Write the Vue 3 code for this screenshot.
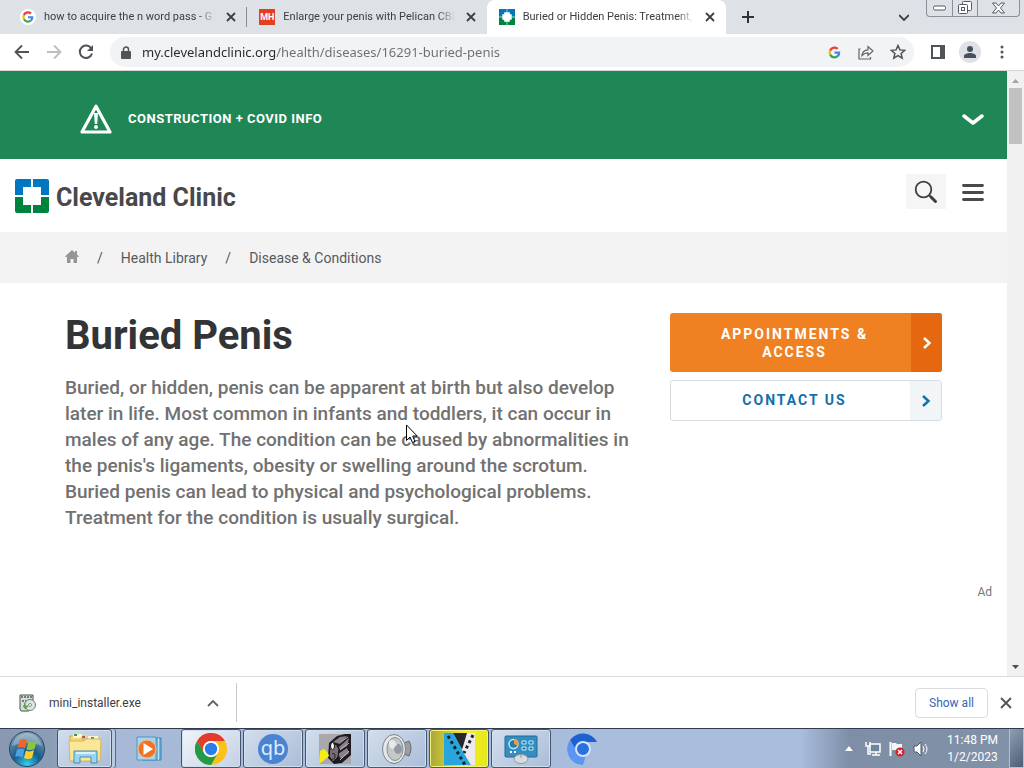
<template>
  <div class="browser">
    <!-- Tab strip -->
    <header class="tab-strip">
      <div class="tabs" role="tablist">
        <div v-for="tab in tabs" :key="tab.id" class="tab" :class="{ active: tab.id === activeTab }" role="tab" @click="activeTab = tab.id">
          <svg v-if="tab.icon === 'google'" class="favicon" viewBox="0 0 24 24">
            <circle cx="12" cy="12" r="12" fill="#fff" />
            <path d="M20 12.2c0-.6 0-1-.1-1.5H12v3.100h4.500c-.3 1.300-1 2.100-1.700 2.600l2.700 2.100c1.600-1.500 2.500-3.700 2.500-6.300z" fill="#4285f4" />
            <path d="M12 20.500c2.300 0 4.100-.7 5.500-2l-2.700-2.100c-.7.5-1.700.8-2.800.8-2.200 0-4.100-1.500-4.700-3.500l-2.800 2.100c1.300 2.800 4.200 4.700 7.500 4.700z" fill="#34a853" />
            <path d="M7.300 13.700c-.4-1.100-.4-2.300 0-3.400L4.500 8.100c-1.200 2.400-1.200 5.300 0 7.700z" fill="#fbbc05" />
            <path d="M12 6.800c1.200 0 2.300.4 3.200 1.300l2.400-2.400C16.100 4.300 14.200 3.500 12 3.500c-3.300 0-6.200 1.900-7.500 4.600l2.800 2.200c.6-2 2.500-3.500 4.700-3.500z" fill="#ea4335" />
          </svg>
          <span v-else-if="tab.icon === 'mh'" class="favicon mh">MH</span>
          <svg v-else class="favicon" viewBox="0 0 34 34">
            <path d="M0 0h34v17H0z" fill="#0077b8" />
            <path d="M0 17h34v17H0z" fill="#00843d" />
            <path d="M16 0h2v34h-2zM0 16h34v2H0z" fill="#9fd0d0" />
            <path d="M11 7h12v4h4v12h-4v4H11v-4H7V11h4z" fill="#fff" />
          </svg>
          <span class="tab-title">{{ tab.title }}</span>
          <button class="icon-btn" aria-label="Close tab">
            <svg width="10" height="10" viewBox="0 0 10 10"><path d="M1 1l8 8M9 1L1 9" stroke="#3c4043" stroke-width="1.800" /></svg>
          </button>
        </div>
      </div>
      <button class="icon-btn new-tab" aria-label="New tab">
        <svg width="12" height="12" viewBox="0 0 12 12"><path d="M6 0v12M0 6h12" stroke="#303336" stroke-width="2" /></svg>
      </button>
      <button class="icon-btn tab-search" aria-label="Search tabs">
        <svg width="10" height="7" viewBox="0 0 10 7"><path d="M0 1l5 5 5-5" fill="none" stroke="#3c4043" stroke-width="1.800" /></svg>
      </button>
      <div class="window-controls">
        <button aria-label="Minimize">
          <svg width="13" height="6" viewBox="0 0 13 6"><rect x=".5" y="1" width="12" height="4" rx="1.500" fill="#fff" stroke="#555a62" /></svg>
        </button>
        <button aria-label="Restore">
          <svg width="14" height="14" viewBox="0 0 14 14" fill="#fff" stroke="#555a62">
            <rect x="4.500" y=".5" width="9" height="9" rx="1" />
            <rect x=".5" y="3.500" width="9" height="9" rx="1" />
            <rect x="3.500" y="6.500" width="3" height="3" />
          </svg>
        </button>
        <button class="wide" aria-label="Close">
          <svg width="13" height="12" viewBox="0 0 13 12"><path d="M.5 1h3.500l2.500 3L9 1h3.500L8.500 6l4 5H9L6.500 8 4 11H.5l4-5z" fill="#fff" stroke="#555a62" /></svg>
        </button>
      </div>
    </header>

    <!-- Toolbar -->
    <nav class="toolbar">
      <button class="tool" aria-label="Back">
        <svg width="16" height="16" viewBox="0 0 16 16"><path d="M15 8H2M8 1.500L1.500 8 8 14.500" fill="none" stroke="#505357" stroke-width="1.800" /></svg>
      </button>
      <button class="tool" aria-label="Forward">
        <svg width="16" height="16" viewBox="0 0 16 16"><path d="M1 8h13M8 1.500L14.500 8 8 14.500" fill="none" stroke="#bcbec1" stroke-width="1.800" /></svg>
      </button>
      <button class="tool" aria-label="Reload">
        <svg width="16" height="16" viewBox="0 0 16 16">
          <path d="M13.300 4.500A6.200 6.200 0 1 0 14 9.500" fill="none" stroke="#505357" stroke-width="2" />
          <path d="M15 1v6H9z" fill="#505357" />
        </svg>
      </button>
      <div class="address">
        <svg width="10" height="13" viewBox="0 0 10 13">
          <rect y="5" width="10" height="8" rx="1" fill="#505357" />
          <path d="M2.500 6V3.500a2.500 2.500 0 0 1 5 0V6" fill="none" stroke="#505357" stroke-width="1.500" />
        </svg>
        <input v-model="url" class="url" type="text" aria-label="Address" spellcheck="false" />
        <button class="tool" aria-label="Google">
          <svg width="17" height="17" viewBox="0 0 24 24">
            <path d="M20 12.2c0-.6 0-1-.1-1.500H12v3.100h4.500c-.3 1.300-1 2.100-1.700 2.600l2.700 2.100c1.600-1.500 2.500-3.700 2.500-6.300z" fill="#4285f4" />
            <path d="M12 20.500c2.300 0 4.100-.7 5.500-2l-2.700-2.100c-.7.5-1.700.8-2.800.8-2.200 0-4.100-1.500-4.700-3.500l-2.800 2.100c1.300 2.800 4.200 4.700 7.500 4.700z" fill="#34a853" />
            <path d="M7.300 13.700c-.4-1.100-.4-2.300 0-3.400L4.500 8.100c-1.200 2.400-1.200 5.300 0 7.700z" fill="#fbbc05" />
            <path d="M12 6.800c1.200 0 2.300.4 3.200 1.300l2.400-2.400C16.100 4.300 14.200 3.500 12 3.500c-3.300 0-6.200 1.900-7.500 4.600l2.800 2.200c.6-2 2.500-3.500 4.700-3.500z" fill="#ea4335" />
          </svg>
        </button>
        <button class="tool" aria-label="Share">
          <svg width="16" height="15" viewBox="0 0 16 15" fill="none" stroke="#5f6368" stroke-width="1.200">
            <path d="M2.500 4H1v10h11.500v-2" />
            <path d="M4 10.500c.3-3.700 2.500-5.500 6-5.700V1.500l5 4.500-5 4.500V7.800C7.500 7.800 5.500 8.800 4 10.500z" />
          </svg>
        </button>
        <button class="tool" aria-label="Bookmark">
          <svg width="16" height="16" viewBox="0 0 16 16"><path d="M8 1.500l1.900 4.400 4.800.4-3.600 3.200 1.100 4.700L8 11.700l-4.200 2.500 1.100-4.700L1.300 6.300l4.800-.4z" fill="none" stroke="#505357" stroke-width="1.500" /></svg>
        </button>
      </div>
      <button class="tool" aria-label="Side panel">
        <svg width="14" height="14" viewBox="0 0 14 14"><path d="M1 1h12v12H1z" fill="none" stroke="#505357" stroke-width="2" /><path d="M9 0h5v14H9z" fill="#505357" /></svg>
      </button>
      <button class="tool" aria-label="Profile">
        <svg width="22" height="22" viewBox="0 0 22 22"><circle cx="11" cy="11" r="11" fill="#dee1e6" /><circle cx="11" cy="8" r="3" fill="#46505c" /><path d="M5 17v-2c0-2 3.500-3 6-3s6 1 6 3v2z" fill="#46505c" /></svg>
      </button>
      <button class="tool" aria-label="Menu">
        <svg width="4" height="14" viewBox="0 0 4 14" fill="#505357"><circle cx="2" cy="2" r="1.500" /><circle cx="2" cy="7" r="1.500" /><circle cx="2" cy="12" r="1.500" /></svg>
      </button>
    </nav>

    <div class="viewport">
      <main class="page">
        <button class="alert-bar">
          <svg width="32" height="30" viewBox="0 0 32 30">
            <path d="M16 2.200L30 28H2z" fill="none" stroke="#fff" stroke-width="3.200" stroke-linejoin="round" />
            <path d="M14 9h4l-.8 11h-2.400z" fill="#fff" />
            <circle cx="16" cy="23" r="2" fill="#fff" />
          </svg>
          <span>CONSTRUCTION + COVID INFO</span>
          <svg class="alert-chevron" width="22" height="12" viewBox="0 0 22 12"><path d="M2 3l9 7 9-7" fill="none" stroke="#fff" stroke-width="3.500" stroke-linecap="round" stroke-linejoin="round" /></svg>
        </button>

        <div class="brand-bar">
          <a href="#" class="brand">
            <svg width="34" height="34" viewBox="0 0 34 34">
              <path d="M2 0h14v8H8v8H0V2a2 2 0 0 1 2-2zM18 0h14a2 2 0 0 1 2 2v14h-8V8h-8z" fill="#0077c0" />
              <path d="M0 18h8v8h8v8H2a2 2 0 0 1-2-2zM26 18h8v14a2 2 0 0 1-2 2H18v-8h8z" fill="#00843d" />
            </svg>
            <span class="brand-name">Cleveland Clinic</span>
          </a>
          <button class="search-btn" aria-label="Search">
            <svg width="24" height="24" viewBox="0 0 24 24" fill="none" stroke="#3e3e40">
              <circle cx="9.500" cy="9.500" r="7.800" stroke-width="1.800" />
              <path d="M15 15l2 2" stroke-width="2" />
              <path d="M17 17l4.500 4.500" stroke-width="3" stroke-linecap="round" />
            </svg>
          </button>
          <button class="menu-btn" aria-label="Menu">
            <svg width="22" height="18" viewBox="0 0 22 18"><path d="M1.500 2.500h19M1.500 9.500h19M1.500 16.500h19" stroke="#4a4a4c" stroke-width="2.800" stroke-linecap="round" /></svg>
          </button>
        </div>

        <nav class="breadcrumbs">
          <a href="#" aria-label="Home">
            <svg width="14" height="15" viewBox="0 0 14 15"><path d="M7 0l3 2.700V1h2v3.500l2 2-1 .8-1-.8V13H8.500V9h-3v4H2V6.500l-1 .8-1-.8z" fill="#969696" /></svg>
          </a>
          <template v-for="crumb in crumbs" :key="crumb">
            <span>/</span>
            <a href="#">{{ crumb }}</a>
          </template>
        </nav>

        <section class="hero">
          <div class="hero-text">
            <h1>Buried Penis</h1>
            <p>
              Buried, or hidden, penis can be apparent at birth but also develop later in life. Most common in infants
              and toddlers, it can occur in males of any age. The condition can be caused by abnormalities in the
              penis's ligaments, obesity or swelling around the scrotum. Buried penis can lead to physical and
              psychological problems. Treatment for the condition is usually surgical.
            </p>
          </div>
          <div class="hero-actions">
            <a href="#" class="cta primary">
              <span class="cta-label">APPOINTMENTS &amp; ACCESS</span>
              <span class="cta-arrow">
                <svg width="10" height="14" viewBox="0 0 10 14"><path d="M2 2l5.500 5L2 12" fill="none" stroke="currentColor" stroke-width="2.500" /></svg>
              </span>
            </a>
            <a href="#" class="cta secondary">
              <span class="cta-label">CONTACT US</span>
              <span class="cta-arrow">
                <svg width="10" height="14" viewBox="0 0 10 14"><path d="M2 2l5.500 5L2 12" fill="none" stroke="currentColor" stroke-width="2.500" /></svg>
              </span>
            </a>
          </div>
        </section>
        <div class="ad-label">Ad</div>
      </main>

      <div class="scrollbar">
        <svg width="7" height="4" viewBox="0 0 7 4"><path d="M0 4l3.500-4L7 4z" fill="#a3a3a3" /></svg>
        <div class="thumb"></div>
        <svg class="down" width="7" height="4" viewBox="0 0 7 4"><path d="M0 0l3.500 4L7 0z" fill="#505050" /></svg>
      </div>

      <!-- Mouse pointer -->
      <svg class="cursor" width="12" height="20" viewBox="0 0 12 20"><path d="M.5 1v15.500L4 13l2.500 5.500 2.500-1L6.700 12h4.500z" fill="#fff" stroke="#000" /></svg>
    </div>

    <!-- Downloads -->
    <footer class="downloads">
      <div class="download-item">
        <svg width="18" height="18" viewBox="0 0 18 18">
          <path d="M1 1h13v5l-2 9-2 2H2l-1-2z" fill="#d5dfd8" stroke="#48534e" />
          <path d="M2 3h11M3 7h5" stroke="#6c8074" stroke-width="2" stroke-dasharray="2 1" />
          <circle cx="11" cy="11" r="5.500" fill="#d9e5df" stroke="#71847b" />
          <circle cx="11" cy="11" r="1.500" fill="#fff" stroke="#83968b" />
          <path d="M6 9v5M4 12l2.500 3L9 12z" fill="#61a543" stroke="#61a543" />
        </svg>
        <span>mini_installer.exe</span>
        <button class="icon-btn" aria-label="Download options">
          <svg width="12" height="8" viewBox="0 0 12 8"><path d="M1 7l5-5 5 5" fill="none" stroke="#5f6368" stroke-width="1.800" /></svg>
        </button>
      </div>
      <button class="show-all">Show all</button>
      <button class="icon-btn" aria-label="Close downloads">
        <svg width="12" height="12" viewBox="0 0 12 12"><path d="M1 1l10 10M11 1L1 11" stroke="#505357" stroke-width="1.800" /></svg>
      </button>
    </footer>

    <!-- Taskbar -->
    <div class="taskbar">
      <button class="start" aria-label="Start">
        <svg width="36" height="36" viewBox="0 0 36 36">
          <defs>
            <radialGradient id="orb" cx=".5" cy=".95" r=".9">
              <stop offset="0" stop-color="#35d0f2" />
              <stop offset=".45" stop-color="#145c8a" />
              <stop offset="1" stop-color="#7f9db3" />
            </radialGradient>
          </defs>
          <circle cx="18" cy="18" r="17.500" fill="url(#orb)" stroke="#2a4662" />
          <path d="M3 15C6 5 13 2 18 2s12 3 15 13c-9-4-20-4-30 0z" fill="#fff" opacity=".28" />
          <path d="M11 9q4-2 7 .5l-2 8q-4-2-7.500-.5z" fill="#f0652b" />
          <path d="M19.500 10.500q4 2 8-.5l-2 8q-4 2-8 .5z" fill="#8cc63f" />
          <path d="M8 18.500q4-2 7.500 0l-2 8q-4-2-7.500-.5z" fill="#4ba3e6" />
          <path d="M17 19.500q4 2 8-.5l-2 8q-4 2-8 0z" fill="#ffcf2e" />
        </svg>
      </button>
      <button v-for="app in apps" :key="app.name" class="task" :class="app.state" :aria-label="app.name">
        <svg v-if="app.name === 'Explorer'" width="34" height="32" viewBox="0 0 34 32">
          <path d="M2 3h10l2 3h17v22H2z" fill="#f0d778" stroke="#c9ab50" />
          <path d="M5 1h9v4H5zM20 3h10v5H20z" fill="#fff7c9" />
          <path d="M6 1h3v2H6z" fill="#3a9a45" /><path d="M14 3h3v2h-3z" fill="#d2493b" /><path d="M23 4h3v2h-3z" fill="#3c83ca" />
          <path d="M1 8h15l2-2h15l-1 22H2z" fill="#fbe796" stroke="#d8b95b" />
          <path d="M6 18h23v12h-6v-6H12v6H6z" fill="#9ad6f0" stroke="#458cb9" />
          <path d="M8 20h19" stroke="#d8f1fb" stroke-width="2" />
        </svg>
        <svg v-else-if="app.name === 'Media Player'" width="26" height="26" viewBox="0 0 26 26">
          <path d="M7 2h18v22H7z" fill="#6db4df" stroke="#3382b5" />
          <path d="M22.500 2v22" stroke="#bfe2f5" />
          <path d="M1 1h19v23H1z" fill="#a9d3ee" stroke="#4b96c3" />
          <circle cx="11" cy="13" r="9" fill="#ed7423" stroke="#f8bc8d" />
          <path d="M7.500 7l9.500 6-9.500 6z" fill="#fff" />
        </svg>
        <svg v-else-if="app.name === 'Chrome'" width="32" height="32" viewBox="0 0 32 32">
          <circle cx="16" cy="16" r="16" fill="#fbc116" />
          <path d="M2.100 8A16 16 0 0 1 29.900 8H16a8 8 0 0 0-7 12z" fill="#e33b2e" />
          <path d="M2.100 8A16 16 0 0 0 16 32l7-12a8 8 0 0 1-14 0z" fill="#249a48" />
          <circle cx="16" cy="16" r="8" fill="#fff" />
          <circle cx="16" cy="16" r="6.200" fill="#2b7de9" />
        </svg>
        <span v-else-if="app.name === 'qBittorrent'" class="qb">qb</span>
        <svg v-else-if="app.name === 'Winamp'" width="32" height="30" viewBox="0 0 32 30">
          <path d="M0 0h32v30H0z" fill="#aaa8aa" />
          <path d="M10 9l8-7 8-2h6v21l-9 8-8 1-6-6z" fill="#1d1b20" />
          <path d="M14 8l7-5 7-1-7 8zM20 13l10-9-2 8-7 4zM19 20l9-6 2 5-8 6z" fill="#8b7f88" />
          <path d="M11 14l6-4 3 5-1 8-5 5-4-6z" fill="#776c76" stroke="#151419" />
          <ellipse cx="13.500" cy="12" rx="2" ry="3.500" fill="#fff" stroke="#151419" />
          <path d="M13 20q3-2 3 2t-3 3" fill="none" stroke="#1d1b20" />
          <path d="M0 30l1-13 4-2 4 4 1 3-7 6z" fill="#f5ee16" />
          <path d="M22 8l7-5M21 16l9-7M21 26l9-9" stroke="#bcb5bb" />
        </svg>
        <svg v-else-if="app.name === 'Volume'" width="32" height="32" viewBox="0 0 32 32">
          <path d="M12 2q9 1 11 8l5-2q4 7 0 15l-5-2q-2 7-10 9z" fill="#9a9ea2" stroke="#646a70" />
          <ellipse cx="13" cy="16" rx="11.500" ry="14.500" fill="#e4e7e8" stroke="#7b8286" />
          <ellipse cx="14" cy="16" rx="8" ry="11.500" fill="#c3c8cb" stroke="#858e94" />
          <ellipse cx="17" cy="16" rx="4" ry="5" fill="#9299a0" />
          <path d="M8 8q5-3 8 4l-4 4q-5-1-4-8z" fill="#f5f6f6" opacity=".7" />
        </svg>
        <svg v-else-if="app.name === 'Vegas'" width="31" height="32" viewBox="0 0 31 32">
          <path d="M9 0h16l-7 17z" fill="#28262c" />
          <path d="M0 0h9l18 32H0z" fill="#28a5dc" />
          <path d="M23 0h8v32h-4l-9-15z" fill="#eee9ed" />
          <path d="M4 3l17 29M29 2l-9 18" stroke="#17232b" stroke-width="3" stroke-dasharray="3 3" />
        </svg>
        <svg v-else-if="app.name === 'Control Panel'" width="34" height="30" viewBox="0 0 34 30">
          <rect x="1" y="2" width="32" height="21" rx="1" fill="#348fc0" stroke="#236b96" />
          <circle cx="9.500" cy="10" r="4.500" fill="#267aaa" stroke="#b9e5f7" stroke-width="1.500" />
          <path d="M10 10V5a5 5 0 0 1 4 7z" fill="#f29a36" />
          <path d="M18 7h4v3h-4zM25 7h4v3h-4zM18 13h4v3h-4zM25 13h4v3h-4z" fill="#2074a3" stroke="#c5ebf9" />
          <path d="M6 18h2M10 18h2" stroke="#fff" stroke-width="2" />
          <ellipse cx="17" cy="25" rx="7" ry="4.500" fill="#d8dcdf" stroke="#9299a0" />
          <path d="M17 21v3" stroke="#9299a0" />
        </svg>
        <svg v-else width="32" height="32" viewBox="0 0 32 32">
          <path d="M3 7A16 16 0 0 1 30 9H16a7 7 0 0 0-6 10z" fill="#1e62d0" />
          <path d="M3 7l7 12a7 7 0 0 0 9 3l-3 10A16 16 0 0 1 3 7z" fill="#5c96f2" />
          <circle cx="16" cy="16" r="7" fill="#2a71df" stroke="#d6e6fb" stroke-width="2" />
        </svg>
      </button>

      <div class="tray">
        <svg width="8" height="5" viewBox="0 0 8 5"><path d="M0 5l4-5 4 5z" fill="#fff" /></svg>
        <svg class="tray-first" width="16" height="16" viewBox="0 0 16 16">
          <path d="M5 3h10v8H5z" fill="#70849c" stroke="#fff" stroke-width="1.500" />
          <path d="M7 14h8M11 11v3M1 1v4h4V1M3 5v8h3" fill="none" stroke="#fff" stroke-width="1.500" />
        </svg>
        <svg width="16" height="16" viewBox="0 0 16 16">
          <path d="M1.500 1v14" stroke="#fff" stroke-width="2" />
          <path d="M3 2h4l1 1h5v7H8L7 9H3z" fill="#f2f4f6" />
          <circle cx="11" cy="11" r="4.500" fill="#d1222b" />
          <path d="M9 9l4 4M13 9l-4 4" stroke="#fff" stroke-width="1.500" />
        </svg>
        <svg width="16" height="16" viewBox="0 0 16 16">
          <path d="M1 5h3l4-4v14l-4-4H1z" fill="#fff" stroke="#4a586a" />
          <path d="M10 5q2 3 0 6M12 3q4 5 0 10" fill="none" stroke="#fff" />
        </svg>
        <div class="clock">
          <div>11:48 PM</div>
          <div>1/2/2023</div>
        </div>
        <button class="show-desktop" aria-label="Show desktop"></button>
      </div>
    </div>
  </div>
</template>

<script setup>
import { ref } from 'vue';

const tabs = [
  { id: 1, icon: 'google', title: 'how to acquire the n word pass - G' },
  { id: 2, icon: 'mh', title: 'Enlarge your penis with Pelican CBD' },
  { id: 3, icon: 'clinic', title: 'Buried or Hidden Penis: Treatment,' }
];
const activeTab = ref(3);
const url = ref('my.clevelandclinic.org/health/diseases/16291-buried-penis');

const crumbs = ['Health Library', 'Disease & Conditions'];

// state: open = framed button, pinned = icon only
const apps = [
  { name: 'Explorer', state: 'open stacked' },
  { name: 'Media Player', state: 'pinned' },
  { name: 'Chrome', state: 'open current' },
  { name: 'qBittorrent', state: 'open' },
  { name: 'Winamp', state: 'open' },
  { name: 'Volume', state: 'open' },
  { name: 'Vegas', state: 'open flashing' },
  { name: 'Control Panel', state: 'open' },
  { name: 'Chromium', state: 'pinned' }
];
</script>

<style>
body {
  margin: 0;
}
</style>

<style scoped>
* {
  box-sizing: border-box;
}

.browser {
  display: flex;
  flex-direction: column;
  min-height: 100vh;
  background: #fff;
  font-family: Roboto, "Noto Sans", sans-serif;
  font-size: 12px;
  color: #3c4043;
}

button {
  border: none;
  background: none;
  padding: 0;
  font: inherit;
  color: inherit;
  cursor: pointer;
}

a {
  color: inherit;
  text-decoration: none;
}

svg {
  display: block;
  flex-shrink: 0;
}

.icon-btn {
  display: flex;
  align-items: center;
  justify-content: center;
  flex-shrink: 0;
  width: 16px;
  height: 16px;
}

/* Tabs */
.tab-strip {
  display: flex;
  align-items: center;
  height: 34px;
  padding: 0 4px 0 8px;
  background: #dee1e6;
}

.tabs {
  display: flex;
  flex: 0 1 718px;
  min-width: 0;
  height: 34px;
}

.tab {
  display: flex;
  flex: 1 1 0;
  align-items: center;
  gap: 8px;
  min-width: 0;
  padding: 0 8px 0 12px;
}

.tab:first-child {
  background: linear-gradient(#8a8d91, #8a8d91) right center / 1px 20px no-repeat;
}

.tab.active {
  background: #fff;
  border-radius: 8px 8px 0 0;
}

.favicon {
  flex-shrink: 0;
  width: 16px;
  height: 16px;
}

.mh {
  background: #e2401f;
  color: #fff;
  font-size: 9px;
  font-weight: 700;
  line-height: 16px;
  text-align: center;
}

.tab-title {
  flex: 1;
  min-width: 0;
  overflow: hidden;
  white-space: nowrap;
  mask-image: linear-gradient(to right, #000 90%, transparent);
  font-size: 11px;
  line-height: 16px;
}

.new-tab {
  margin-left: 14px;
}

.tab-search {
  margin-left: auto;
  margin-right: 14px;
}

.window-controls {
  display: flex;
  align-self: flex-start;
  height: 17px;
  border: 1px solid #8b8f96;
  border-top: none;
  border-radius: 0 0 4px 4px;
}

.window-controls button {
  display: flex;
  align-items: center;
  justify-content: center;
  width: 25px;
}

.window-controls button + button {
  border-left: 1px solid #8b8f96;
}

.window-controls .wide {
  width: 42px;
}

/* Toolbar */
.toolbar {
  display: flex;
  align-items: center;
  height: 37px;
  padding: 0 6px;
  border-bottom: 1px solid #d4d6d9;
}

.tool {
  display: flex;
  align-items: center;
  justify-content: center;
  flex-shrink: 0;
  width: 32px;
  height: 28px;
}

.address {
  display: flex;
  flex: 1;
  align-items: center;
  height: 30px;
  margin: 0 8px;
  padding: 0 0 0 11px;
  border-radius: 15px;
  background: #f1f3f4;
}

/* Host is darker than the path */
.url {
  flex: 1;
  min-width: 0;
  margin-left: 11px;
  padding: 0;
  border: none;
  outline: none;
  background: linear-gradient(to right, #26282b 133px, #6a6e73 133px);
  background-clip: text;
  color: transparent;
  font-family: "Noto Sans", sans-serif;
  font-size: 13px;
}

/* Page */
.viewport {
  display: flex;
  flex: 1;
  position: relative;
}

.page {
  display: flex;
  flex: 1;
  flex-direction: column;
  min-width: 0;
}

.alert-bar {
  display: flex;
  align-items: center;
  gap: 16px;
  height: 88px;
  padding: 7px 23px 0 80px;
  background: #1f8655;
  color: #fff;
  font-size: 13px;
  font-weight: 700;
  letter-spacing: 0.5px;
}

.alert-chevron {
  margin-left: auto;
}

.brand-bar {
  display: flex;
  align-items: flex-start;
  height: 73px;
  padding: 15px 22px 0 15px;
}

.brand {
  display: flex;
  align-items: center;
  gap: 7px;
  margin-top: 5px;
  margin-right: auto;
}

.brand-name {
  padding-top: 4px;
  color: #48484a;
  font-size: 25px;
  font-weight: 700;
  line-height: 30px;
}

.search-btn,
.menu-btn {
  display: flex;
  align-items: center;
  justify-content: center;
  height: 35px;
}

.search-btn {
  width: 40px;
  background: #f5f5f5;
}

.menu-btn {
  width: 24px;
  margin-left: 15px;
}

.breadcrumbs {
  display: flex;
  align-items: center;
  gap: 18px;
  height: 51px;
  padding: 0 65px;
  background: #f3f3f3;
  color: #58595b;
  font-size: 14px;
}

.hero {
  display: grid;
  grid-template-columns: minmax(0, 1fr) 272px;
  align-items: start;
  gap: 30px;
  padding: 30px 65px 0;
}

.hero h1 {
  margin: 0;
  color: #333435;
  font-size: 40px;
  font-weight: 700;
  line-height: 46px;
}

.hero p {
  margin: 16px 0 0;
  color: #717171;
  font-size: 19px;
  font-weight: 500;
  line-height: 26px;
}

.hero-actions {
  display: flex;
  flex-direction: column;
  gap: 8px;
}

.cta {
  display: flex;
  overflow: hidden;
  border-radius: 3px;
  font-size: 14px;
  font-weight: 700;
  line-height: 18px;
  letter-spacing: 2px;
  text-align: center;
}

.cta-label {
  flex: 1;
  padding: 12px 36px 11px 44px;
}

.cta-arrow {
  display: flex;
  align-items: center;
  justify-content: center;
  width: 31px;
}

.primary {
  background: #f08122;
  color: #fff;
}

.primary .cta-arrow {
  background: #e5670f;
}

.secondary {
  border: 1px solid #d6dce0;
  color: #1270ac;
}

.secondary .cta-label {
  padding-top: 10px;
}

.secondary .cta-arrow {
  background: #f1f5f8;
}

.ad-label {
  margin-top: auto;
  padding: 0 15px 75px;
  color: #77787a;
  font-size: 12px;
  line-height: 18px;
  text-align: right;
}

.scrollbar {
  display: flex;
  flex-direction: column;
  align-items: center;
  width: 17px;
  padding: 8px 0 7px;
  background: #f1f1f1;
}

.thumb {
  width: 13px;
  height: 56px;
  margin-top: 5px;
  background: #c1c1c1;
}

.down {
  margin-top: auto;
}

.cursor {
  position: absolute;
  left: 406px;
  top: 353px;
}

/* Downloads */
.downloads {
  display: flex;
  align-items: center;
  gap: 10px;
  height: 52px;
  padding-right: 10px;
  border-top: 1px solid #dadce0;
}

.download-item {
  display: flex;
  align-items: center;
  gap: 12px;
  width: 237px;
  height: 39px;
  margin-right: auto;
  padding: 0 15px 0 19px;
  border-right: 1px solid #c8cacd;
}

.download-item .icon-btn {
  margin-left: auto;
}

.show-all {
  width: 73px;
  height: 30px;
  border: 1px solid #dadce0;
  border-radius: 4px;
  color: #3a66b5;
}

/* Taskbar */
.taskbar {
  display: flex;
  align-items: stretch;
  gap: 2px;
  height: 40px;
  border-top: 1px solid #2f3b4b;
  background: linear-gradient(to right, #8798b0 0, #8c9db6 50px, #a6bad7 120px, #a9bedd 800px, #7d8ea6 850px, #8292a8 100%);
}

.start {
  display: flex;
  align-items: center;
  padding: 0 10px 0 9px;
}

.task {
  display: flex;
  align-items: center;
  justify-content: center;
  width: 60px;
  border: 1px solid transparent;
  border-radius: 3px;
}

.open {
  border-color: #45566e;
  background: linear-gradient(135deg, #d3deed, #aabdd8);
  box-shadow: inset 0 0 0 1px #d2dfef;
}

.stacked {
  width: 55px;
  margin-right: 5px;
  box-shadow: inset 0 0 0 1px #d2dfef, 3px 0 0 #b9c9df, 4px 0 0 #5a6c84;
}

.current {
  background: linear-gradient(135deg, #f1f5fa, #c3d0e3);
}

.flashing {
  background: linear-gradient(to right, #a8a542, #f3ef1c 60%, #e6e71c);
  box-shadow: inset 0 0 0 1px #f4f27a;
}

.qb {
  width: 30px;
  height: 30px;
  border-radius: 50%;
  background: #4a83cf;
  color: #dcecff;
  font-family: "Noto Sans", sans-serif;
  font-size: 20px;
  line-height: 27px;
}

.tray {
  display: flex;
  align-items: center;
  gap: 8px;
  margin-left: auto;
  color: #fff;
}

.tray-first {
  margin-left: 4px;
}

.clock {
  margin: 0 3px 0 10px;
  font-size: 12px;
  line-height: 17px;
  text-align: center;
}

.show-desktop {
  align-self: stretch;
  width: 15px;
  border: 1px solid #b6c1cf;
  border-top: none;
  background: linear-gradient(135deg, #8f9eb2, #4e5f75);
}
</style>
